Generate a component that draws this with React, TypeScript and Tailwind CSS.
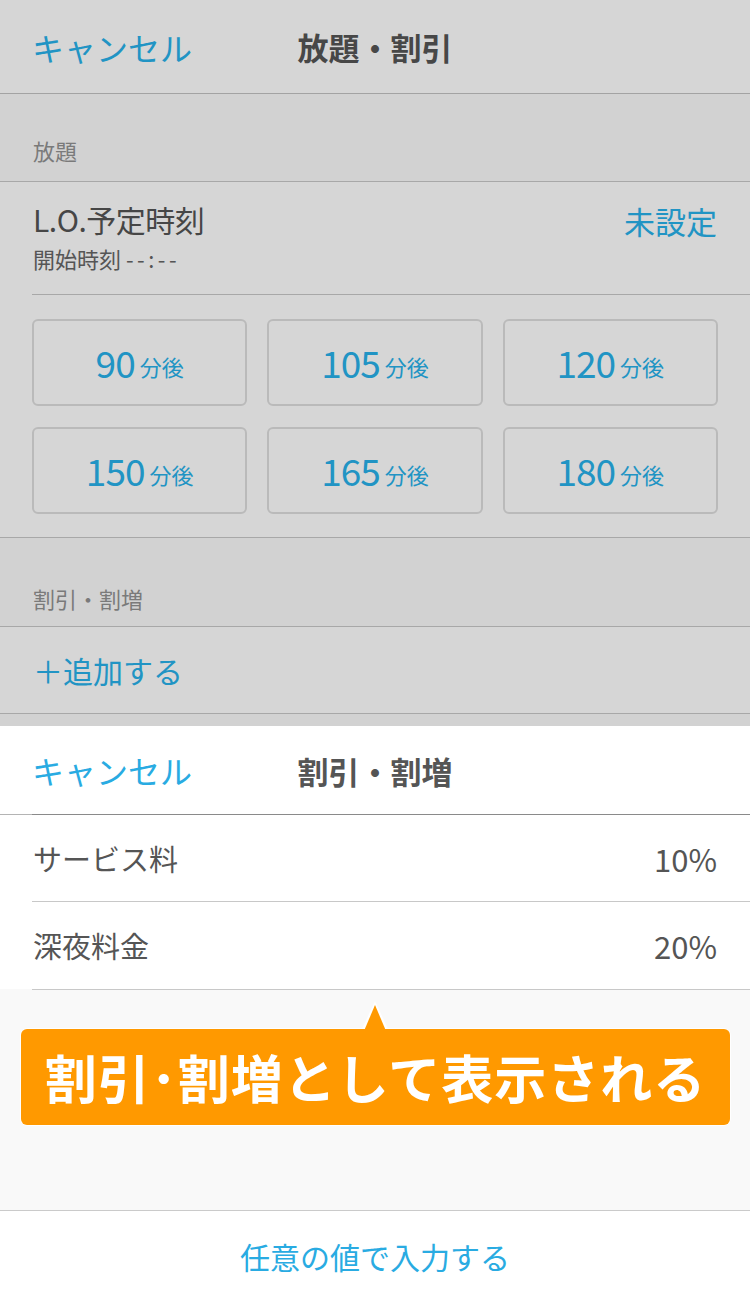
import React from "react";

const F = { fontFamily: '"Noto Sans CJK JP", "Noto Sans", sans-serif' };

function TimeBtn({ n }: { n: string }) {
  return (
    <div className="h-[87px] rounded-[6px] border-2 border-[#bababa] flex items-center justify-center text-[#2194c4]">
      <span className="text-[37px] leading-none tracking-[-1px]">{n}</span>
      <span className="text-[22px] leading-none ml-[5px] mt-[6px]">分後</span>
    </div>
  );
}

export default function App() {
  return (
    <div style={F} className="w-[750px] h-[1300px] overflow-hidden bg-[#d6d6d6] flex flex-col">
      {/* dimmed page */}
      <div className="h-[93px] flex items-center relative shrink-0">
        <span className="ml-[32px] text-[32px] text-[#2194c4] leading-none">キャンセル</span>
        <span className="absolute left-0 right-0 text-center text-[31px] font-bold text-[#474747] leading-none pointer-events-none">放題・割引</span>
      </div>
      <div className="h-[1px] bg-[#a3a3a3] shrink-0" />
      <div className="h-[87px] bg-[#d2d2d2] flex items-end pb-[20px] px-[33px] shrink-0">
        <span className="text-[22px] text-[#7a7a7a] leading-none">放題</span>
      </div>
      <div className="h-[1px] bg-[#a8a8a8] shrink-0" />
      <div className="h-[112px] flex justify-between px-[33px] pt-[22px] shrink-0">
        <div className="flex flex-col">
          <span className="text-[30px] text-[#464646] leading-none tracking-[-0.5px]">L.O.予定時刻</span>
          <span className="text-[22px] text-[#555] leading-none mt-[13px]">
            開始時刻 <span className="tracking-[3.5px]">--:--</span>
          </span>
        </div>
        <span className="text-[31px] text-[#2194c4] leading-none mt-[1px]">未設定</span>
      </div>
      <div className="h-[1px] bg-[#a8a8a8] ml-[32px] shrink-0" />
      <div className="grid grid-cols-3 gap-x-[20px] gap-y-[21px] px-[32px] pt-[24px] pb-[23px] shrink-0">
        {["90", "105", "120", "150", "165", "180"].map((n) => (
          <TimeBtn key={n} n={n} />
        ))}
      </div>
      <div className="h-[1px] bg-[#a8a8a8] shrink-0" />
      <div className="h-[88px] bg-[#d2d2d2] flex items-end pb-[17px] px-[33px] shrink-0">
        <span className="text-[22px] text-[#7a7a7a] leading-none">割引・割増</span>
      </div>
      <div className="h-[1px] bg-[#a8a8a8] shrink-0" />
      <div className="h-[86px] flex items-center px-[33px] shrink-0">
        <span className="text-[30px] text-[#2194c4] leading-none">＋追加する</span>
      </div>
      <div className="h-[1px] bg-[#a8a8a8] shrink-0" />
      <div className="h-[12px] bg-[#d2d2d2] shrink-0" />

      {/* sheet */}
      <div className="flex-1 bg-[#f9f9f9] flex flex-col">
        <div className="h-[88px] bg-white flex items-center relative shrink-0">
          <span className="ml-[32px] text-[32px] text-[#29abe2] leading-none">キャンセル</span>
          <span className="absolute left-0 right-0 text-center text-[31px] font-bold text-[#555] leading-none pointer-events-none">割引・割増</span>
        </div>
        <div className="flex h-[1px] shrink-0">
          <div className="w-[32px] bg-[#b4b4b4]" />
          <div className="flex-1 bg-[#8a8a8a]" />
        </div>
        <div className="bg-white shrink-0">
          <div className="h-[86px] flex items-center justify-between pl-[33px] pr-[33px]">
            <span className="text-[29px] text-[#555] leading-none">サービス料</span>
            <span className="text-[31px] text-[#555] leading-none">10%</span>
          </div>
          <div className="h-[1px] bg-[#c8c8c8] ml-[32px]" />
          <div className="h-[87px] flex items-center justify-between pl-[33px] pr-[33px]">
            <span className="text-[29px] text-[#555] leading-none">深夜料金</span>
            <span className="text-[31px] text-[#555] leading-none">20%</span>
          </div>
        </div>
        <div className="h-[1px] bg-[#c8c8c8] ml-[32px] shrink-0" />
        <div className="flex-1 relative">
          {/* callout */}
          <div className="absolute left-[20px] top-[38px] w-[711px] h-[98px] rounded-[8px] bg-white" />
          <svg className="absolute left-[357px] top-[11px]" width="36" height="30" viewBox="0 0 36 30">
            <polygon points="18,0 4,30 32,30" fill="#ffffff" />
            <polygon points="18,4 7,30 29,30" fill="#ff9900" />
          </svg>
          <div className="absolute left-[21px] top-[39px] w-[709px] h-[96px] rounded-[6px] bg-[#ff9900] flex items-center justify-center">
            <span className="text-[52px] font-bold text-white leading-none tracking-[1px] whitespace-nowrap">割引･割増として表示される</span>
          </div>
        </div>
        <div className="h-[1px] bg-[#cacaca] shrink-0" />
        <div className="h-[89px] bg-white flex items-center justify-center shrink-0">
          <span className="text-[30px] text-[#29abe2] leading-none">任意の値で入力する</span>
        </div>
      </div>
    </div>
  );
}
